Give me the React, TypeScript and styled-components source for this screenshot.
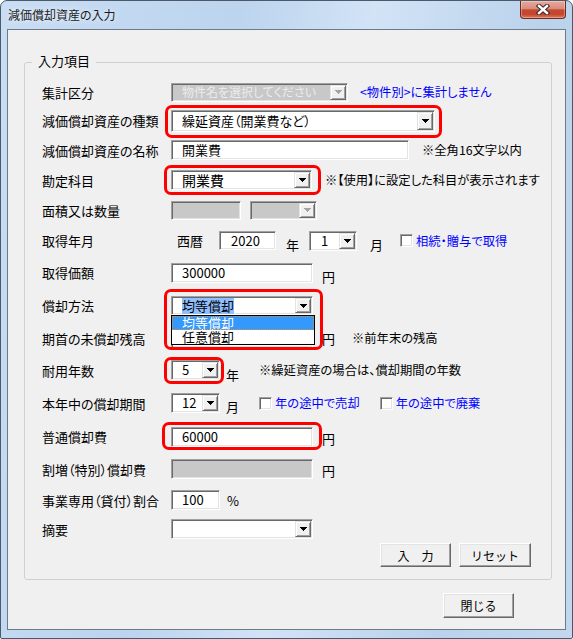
import React from 'react';
import styled, { createGlobalStyle } from 'styled-components';

const GlobalStyle = createGlobalStyle`
  html, body { margin: 0; padding: 0; background: #fff; }
  body {
    font-family: "Noto Sans CJK JP", "Noto Sans", sans-serif;
    font-feature-settings: "palt";
    color: #000;
  }
  * { box-sizing: border-box; }
`;

/* ---------- window chrome ---------- */

const Window = styled.div`
  width: 573px;
  height: 639px;
  display: flex;
  flex-direction: column;
  padding: 0 6px 8px 6px;
  border: 1px solid #4b5a6b;
  border-radius: 7px 7px 2px 2px;
  background: linear-gradient(100deg, #c9ddf3 0%, #bcd4ee 35%, #d2e3f6 55%, #bad2eb 80%, #c3d8ef 100%);
  overflow: hidden;
`;

const TitleBar = styled.div`
  height: 28px;
  flex: none;
  display: flex;
  justify-content: space-between;
  align-items: flex-start;
`;

const TitleText = styled.div`
  margin: 6px 0 0 1px;
  font-size: 12px;
  line-height: 16px;
  color: #1a1a1a;
  text-shadow: 0 0 5px rgba(255, 255, 255, 0.95);
`;

const CloseButton = styled.div`
  width: 46px;
  height: 18px;
  display: flex;
  align-items: center;
  justify-content: center;
  border: 1px solid #6e2a20;
  border-top: 0;
  border-radius: 0 0 4px 4px;
  background: linear-gradient(180deg, #e8aa9d 0%, #d98b7c 45%, #c24b34 52%, #c6442b 78%, #de7a5c 100%);
  box-shadow: inset 0 0 0 1px rgba(255, 255, 255, 0.3);
`;

const Client = styled.div`
  flex: 1;
  display: flex;
  flex-direction: column;
  border: 1px solid #6d7a88;
  background: #f0f0f0;
  padding: 0 13px 0 16px;
`;

/* ---------- group box ---------- */

const Group = styled.div`
  position: relative;
  margin-top: 32px;
  border: 1px solid #cbd1d6;
  border-radius: 3px;
  padding: 15px 0 12px 17px;
`;

const Legend = styled.span`
  position: absolute;
  top: -10px;
  left: 7px;
  padding: 0 6px;
  background: #f0f0f0;
  font-size: 13px;
  line-height: 16px;
`;

const Row = styled.div<{ $h: number }>`
  display: flex;
  align-items: center;
  height: ${p => p.$h}px;
`;

const Label = styled.div`
  width: 129px;
  flex: none;
  font-size: 13px;
  white-space: nowrap;
`;

/* ---------- controls ---------- */

const Field = styled.div<{ $w: number; $h?: number; $ml?: number; $off?: boolean }>`
  position: relative;
  flex: none;
  display: flex;
  width: ${p => p.$w}px;
  height: ${p => p.$h ?? 20}px;
  margin-left: ${p => p.$ml ?? 0}px;
  border: 1px solid;
  border-color: #a0a0a0 #ffffff #ffffff #a0a0a0;
  box-shadow: inset 1px 1px 0 #696969, inset -1px -1px 0 #e3e3e3;
  background: ${p => (p.$off ? '#c8c8c8' : '#ffffff')};
  padding: 1px;
`;

const FieldText = styled.div<{ $fs?: number; $pl?: number; $muted?: boolean }>`
  flex: 1;
  min-width: 0;
  display: flex;
  align-items: center;
  padding-left: ${p => p.$pl ?? 9}px;
  font-size: ${p => p.$fs ?? 13}px;
  line-height: 16px;
  white-space: nowrap;
  color: ${p => (p.$muted ? '#ececec' : '#000')};
`;

const Selected = styled.span`
  background: #8fbfff;
`;

const DropButton = styled.div`
  width: 16px;
  flex: none;
  display: flex;
  align-items: center;
  justify-content: center;
  background: #f0f0f0;
  border: 1px solid;
  border-color: #e3e3e3 #696969 #696969 #e3e3e3;
  box-shadow: inset 1px 1px 0 #fff, inset -1px -1px 0 #a0a0a0;
`;

const Drop = ({ off }: { off?: boolean }) => (
  <DropButton>
    <svg width="7" height="4" viewBox="0 0 7 4" shapeRendering="crispEdges">
      <polygon points="0,0 7,0 3.5,4" fill={off ? '#a3a3a3' : '#000'} />
    </svg>
  </DropButton>
);

const DropList = styled.ul`
  position: absolute;
  top: calc(100% + 1px);
  left: -1px;
  width: 144px;
  margin: 0;
  padding: 0;
  list-style: none;
  background: #fff;
  border: 1px solid #000;
  z-index: 2;
`;

const DropItem = styled.li<{ $sel?: boolean }>`
  height: 14px;
  line-height: 14px;
  padding-left: 10px;
  font-size: 13px;
  background: ${p => (p.$sel ? '#3399ff' : '#fff')};
  color: ${p => (p.$sel ? '#fff' : '#000')};
  outline: ${p => (p.$sel ? '1px dotted #d9902f' : 'none')};
  outline-offset: -1px;
`;

const Mark = styled.div<{ $t: number; $r: number; $b: number; $l: number }>`
  position: relative;
  flex: none;
  display: flex;
  &::after {
    content: '';
    position: absolute;
    top: -${p => p.$t}px;
    right: -${p => p.$r}px;
    bottom: -${p => p.$b}px;
    left: -${p => p.$l}px;
    border: 3px solid #ff0000;
    border-radius: 7px;
    pointer-events: none;
    z-index: 3;
  }
`;

const Unit = styled.span<{ $ml?: number; $low?: number }>`
  flex: none;
  margin-left: ${p => p.$ml ?? 0}px;
  margin-top: ${p => p.$low ?? 0}px;
  font-size: 13px;
  white-space: nowrap;
`;

const Note = styled.span<{ $ml?: number; $blue?: boolean }>`
  flex: none;
  margin-left: ${p => p.$ml ?? 0}px;
  font-size: 12.3px;
  white-space: nowrap;
  color: ${p => (p.$blue ? '#0000ff' : '#000')};
`;

const Check = styled.span<{ $ml?: number }>`
  flex: none;
  width: 13px;
  height: 13px;
  margin-left: ${p => p.$ml ?? 0}px;
  background: #fff;
  border: 1px solid;
  border-color: #a0a0a0 #fff #fff #a0a0a0;
  box-shadow: inset 1px 1px 0 #696969, inset -1px -1px 0 #e3e3e3;
`;

const ButtonRow = styled.div`
  display: flex;
  justify-content: flex-end;
  gap: 8px;
  padding-right: 20px;
`;

const PushButton = styled.button<{ $w: number; $h: number }>`
  width: ${p => p.$w}px;
  height: ${p => p.$h}px;
  padding: 0;
  background: #f0f0f0;
  border: 1px solid;
  border-color: #ffffff #696969 #696969 #ffffff;
  box-shadow: inset -1px -1px 0 #a0a0a0, inset 1px 1px 0 #e3e3e3;
  font-family: inherit;
  font-size: 12px;
  color: #000;
`;

const Footer = styled.div`
  display: flex;
  justify-content: flex-end;
  margin-top: 13px;
  padding-right: 38px;
`;

export default function App() {
  return (
    <>
      <GlobalStyle />
      <Window>
        <TitleBar>
          <TitleText>減価償却資産の入力</TitleText>
          <CloseButton>
            <svg width="14" height="11" viewBox="0 0 14 11">
              <path d="M3 2 L11 9 M11 2 L3 9" stroke="#3d2a28" strokeWidth="4.5" strokeLinecap="square" fill="none" />
              <path d="M3 2 L11 9 M11 2 L3 9" stroke="#ffffff" strokeWidth="2.4" strokeLinecap="square" fill="none" />
            </svg>
          </CloseButton>
        </TitleBar>
        <Client>
          <Group>
            <Legend>入力項目</Legend>

            <Row $h={28}>
              <Label>集計区分</Label>
              <Field $w={177} $h={19} $off>
                <FieldText $muted $fs={12}>物件名を選択してください</FieldText>
                <Drop off />
              </Field>
              <Note $ml={12} $blue>&lt;物件別&gt;に集計しません</Note>
            </Row>

            <Row $h={29}>
              <Label>減価償却資産の種類</Label>
              <Mark $t={5} $r={7} $b={6} $l={6}>
                <Field $w={264} $h={22}>
                  <FieldText>繰延資産（開業費など）</FieldText>
                  <Drop />
                </Field>
              </Mark>
            </Row>

            <Row $h={30}>
              <Label>減価償却資産の名称</Label>
              <Field $w={238}>
                <FieldText>開業費</FieldText>
              </Field>
              <Note $ml={13}>※全角16文字以内</Note>
            </Row>

            <Row $h={30}>
              <Label>勘定科目</Label>
              <Mark $t={5} $r={9} $b={5} $l={7}>
                <Field $w={141}>
                  <FieldText $fs={14}>開業費</FieldText>
                  <Drop />
                </Field>
              </Mark>
              <Note $ml={13}>※【使用】に設定した科目が表示されます</Note>
            </Row>

            <Row $h={30}>
              <Label>面積又は数量</Label>
              <Field $w={70} $h={19} $off />
              <Field $w={67} $h={19} $ml={9} $off>
                <FieldText />
                <Drop off />
              </Field>
            </Row>

            <Row $h={31}>
              <Label>取得年月</Label>
              <Unit $ml={6}>西暦</Unit>
              <Field $w={57} $h={19} $ml={16}>
                <FieldText $pl={10}>2020</FieldText>
              </Field>
              <Unit $ml={10} $low={7}>年</Unit>
              <Field $w={48} $ml={10}>
                <FieldText $pl={10}>1</FieldText>
                <Drop />
              </Field>
              <Unit $ml={13} $low={7}>月</Unit>
              <Check $ml={17} />
              <Note $ml={3} $blue>相続・贈与で取得</Note>
            </Row>

            <Row $h={33}>
              <Label>取得価額</Label>
              <Field $w={142}>
                <FieldText>300000</FieldText>
              </Field>
              <Unit $ml={9} $low={8}>円</Unit>
            </Row>

            <Row $h={33}>
              <Label>償却方法</Label>
              <Mark $t={7} $r={10} $b={35} $l={7}>
                <Field $w={142} $h={19}>
                  <FieldText>
                    <Selected>均等償却</Selected>
                  </FieldText>
                  <Drop />
                  <DropList>
                    <DropItem $sel>均等償却</DropItem>
                    <DropItem>任意償却</DropItem>
                  </DropList>
                </Field>
              </Mark>
            </Row>

            <Row $h={32}>
              <Label>期首の未償却残高</Label>
              <Field $w={142} />
              <Unit $ml={9}>円</Unit>
              <Note $ml={17}>※前年末の残高</Note>
            </Row>

            <Row $h={32}>
              <Label>耐用年数</Label>
              <Mark $t={3} $r={4} $b={4} $l={7}>
                <Field $w={49}>
                  <FieldText>5</FieldText>
                  <Drop />
                </Field>
              </Mark>
              <Unit $ml={6} $low={8}>年</Unit>
              <Note $ml={20}>※繰延資産の場合は、償却期間の年数</Note>
            </Row>

            <Row $h={34}>
              <Label>本年中の償却期間</Label>
              <Field $w={49}>
                <FieldText>12</FieldText>
                <Drop />
              </Field>
              <Unit $ml={6} $low={6}>月</Unit>
              <Check $ml={20} />
              <Note $ml={3} $blue>年の途中で売却</Note>
              <Check $ml={20} />
              <Note $ml={3} $blue>年の途中で廃棄</Note>
            </Row>

            <Row $h={33}>
              <Label>普通償却費</Label>
              <Mark $t={5} $r={9} $b={3} $l={9}>
                <Field $w={142}>
                  <FieldText>60000</FieldText>
                </Field>
              </Mark>
              <Unit $ml={9} $low={3}>円</Unit>
            </Row>

            <Row $h={32}>
              <Label>割増（特別）償却費</Label>
              <Field $w={142} $off />
              <Unit $ml={9} $low={2}>円</Unit>
            </Row>

            <Row $h={30}>
              <Label>事業専用（貸付）割合</Label>
              <Field $w={49}>
                <FieldText>100</FieldText>
              </Field>
              <Unit $ml={7}>%</Unit>
            </Row>

            <Row $h={28}>
              <Label>摘要</Label>
              <Field $w={142}>
                <FieldText />
                <Drop />
              </Field>
            </Row>

            <ButtonRow>
              <PushButton $w={71} $h={24}>入　力</PushButton>
              <PushButton $w={72} $h={24}>リセット</PushButton>
            </ButtonRow>
          </Group>

          <Footer>
            <PushButton $w={71} $h={25}>閉じる</PushButton>
          </Footer>
        </Client>
      </Window>
    </>
  );
}
